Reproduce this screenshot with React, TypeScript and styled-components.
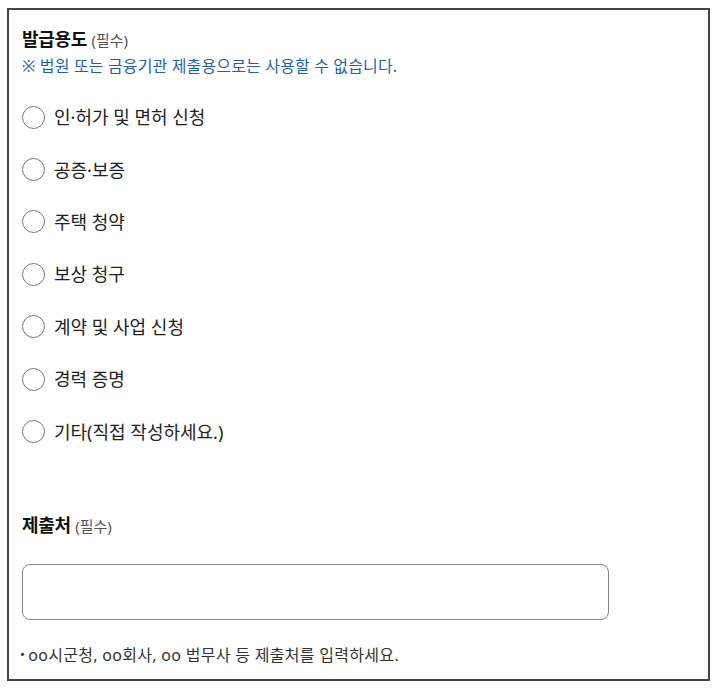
import styled, { createGlobalStyle } from 'styled-components';

const GlobalStyle = createGlobalStyle`
    html, body {
        margin: 0;
        padding: 0;
        background: #ffffff;
    }
    body {
        font-family: 'Noto Sans', 'Noto Sans CJK KR', sans-serif;
        color: #222;
    }
`;

const purposes = [
    '인·허가 및 면허 신청',
    '공증·보증',
    '주택 청약',
    '보상 청구',
    '계약 및 사업 신청',
    '경력 증명',
    '기타(직접 작성하세요.)'
];

const App = (): JSX.Element => {
    return (
        <>
            <GlobalStyle />
            <Frame>
                <Section>
                    <Label>
                        발급용도 <Required>(필수)</Required>
                    </Label>
                    <Notice>※ 법원 또는 금융기관 제출용으로는 사용할 수 없습니다.</Notice>
                    <RadioList>
                        {purposes.map((p) => (
                            <RadioRow key={p}>
                                <RadioInput type="radio" name="purpose" value={p} />
                                <RadioText>{p}</RadioText>
                            </RadioRow>
                        ))}
                    </RadioList>
                </Section>
                <Section $gap={54}>
                    <Label>
                        제출처 <Required>(필수)</Required>
                    </Label>
                    <TextField type="text" />
                    <Hint>
                        <Bullet>•</Bullet>oo시군청, oo회사, oo 법무사 등 제출처를 입력하세요.
                    </Hint>
                </Section>
            </Frame>
        </>
    );
};

export default App;

const Frame = styled.div`
    box-sizing: border-box;
    width: 703px;
    margin: 8px 0 0 7px;
    border: 2px solid #444;
    padding: 16px 13px 11px 13px;
`;

const Section = styled.div<{ $gap?: number }>`
    display: flex;
    flex-direction: column;
    margin-top: ${(p) => p.$gap ?? 0}px;
`;

const Label = styled.div`
    font-size: 18px;
    line-height: 26px;
    font-weight: 700;
    color: #111;
    letter-spacing: -0.3px;
`;

const Required = styled.span`
    font-size: 15px;
    font-weight: 400;
    color: #555;
    letter-spacing: 0;
`;

const Notice = styled.div`
    margin-top: 1px;
    font-size: 16px;
    line-height: 24px;
    color: #1f5fad;
    letter-spacing: 0.15px;
`;

const RadioList = styled.div`
    display: flex;
    flex-direction: column;
    margin-top: 13px;
`;

const RadioRow = styled.label`
    display: flex;
    align-items: center;
    gap: 9px;
    height: 52.4px;
    cursor: pointer;
`;

const RadioInput = styled.input`
    appearance: none;
    box-sizing: border-box;
    margin: 0;
    width: 23px;
    height: 23px;
    border: 1px solid #777;
    border-radius: 50%;
    background: #fff;
    flex-shrink: 0;

    &:checked {
        border: 6px solid #1f5fad;
    }
`;

const RadioText = styled.span`
    font-size: 18px;
    line-height: 26px;
    color: #222;
`;

const TextField = styled.input`
    box-sizing: border-box;
    margin-top: 25px;
    width: 587px;
    height: 56px;
    border: 1px solid #888;
    border-radius: 8px;
    padding: 0 14px;
    font-family: inherit;
    font-size: 16px;
    outline: none;
`;

const Hint = styled.div`
    margin-top: 23px;
    margin-left: -2px;
    font-size: 16px;
    line-height: 24px;
    color: #333;
    letter-spacing: 0.3px;
`;

const Bullet = styled.span`
    font-size: 13px;
    margin-right: 3px;
    position: relative;
    top: -2px;
`;
